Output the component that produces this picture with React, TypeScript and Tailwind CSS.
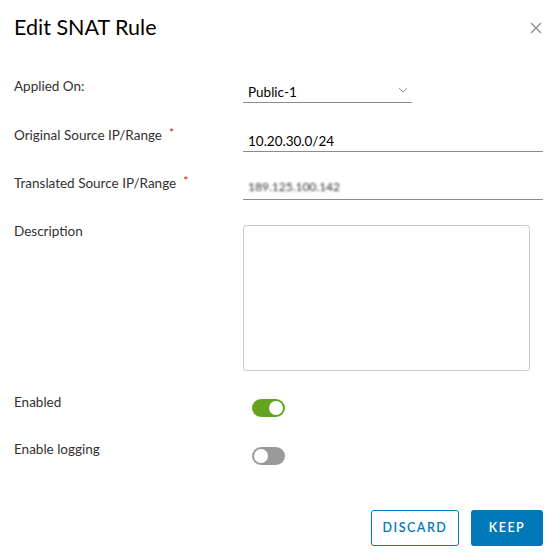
import React from "react";

function Toggle({ on }: { on: boolean }) {
  return (
    <div
      className={
        "relative w-[33px] h-[18px] rounded-full " +
        (on ? "bg-[#62a420]" : "bg-[#9a9a9a]")
      }
    >
      <div
        className={
          "absolute top-[2px] w-[14px] h-[14px] rounded-full bg-white " +
          (on ? "right-[2px]" : "left-[2px]")
        }
      />
    </div>
  );
}

function Req() {
  return <span className="text-[#c92100] ml-[7px] text-[12px] relative top-[-3px]">*</span>;
}

export default function App() {
  return (
    <div
      className="w-[560px] h-[560px] bg-white text-[#313131] relative"
      style={{ fontFamily: "Lato, 'Liberation Sans', sans-serif" }}
    >
      <div className="flex items-center justify-between pl-[14px] pr-[18px] pt-[13px]">
        <h1 className="text-[21.5px] leading-[28px] text-[#000] font-normal">Edit SNAT Rule</h1>
        <svg width="12" height="12" viewBox="0 0 12 12" className="mt-[1px]">
          <path d="M1 1L11 11M11 1L1 11" stroke="#8c8c8c" strokeWidth="1.3" />
        </svg>
      </div>

      <div className="pl-[14px] pr-[17px] mt-[36px] flex flex-col">
        <div className="flex h-[26px] items-start">
          <div className="w-[229px] text-[13.5px] leading-[18px]">Applied On:</div>
          <div className="w-[169px] h-[26px] border-b border-[#8c8c8c] flex items-end justify-between pl-[5px] pr-[4px] pb-[1px]">
            <span className="text-[13.5px] leading-[18px] text-[#000]">Public-1</span>
            <svg width="10" height="6" viewBox="0 0 10 6" className="mb-[8px]">
              <path d="M1 1L5 5L9 1" stroke="#9a9a9a" strokeWidth="1" fill="none" />
            </svg>
          </div>
        </div>

        <div className="flex h-[26px] items-start mt-[23px]">
          <div className="w-[229px] text-[13.5px] leading-[18px]">
            Original Source IP/Range<Req />
          </div>
          <div className="flex-1 h-[26px] border-b border-[#8c8c8c] flex items-end pl-[5px] pb-[1px]">
            <span className="text-[13.5px] leading-[18px] text-[#000]">10.20.30.0/24</span>
          </div>
        </div>

        <div className="flex h-[26px] items-start mt-[22px]">
          <div className="w-[229px] text-[13.5px] leading-[18px]">
            Translated Source IP/Range<Req />
          </div>
          <div className="flex-1 h-[26px] border-b border-[#8c8c8c] flex items-end pl-[5px] pb-[3px]">
            <span className="text-[12px] leading-[18px] text-[#333] blur-[1.2px]">189.125.100.142</span>
          </div>
        </div>

        <div className="flex items-start mt-[25px]">
          <div className="w-[229px] text-[13.5px] leading-[18px] mt-[-3px]">Description</div>
          <div className="w-[287px] h-[146px] border border-[#cccccc] rounded-[3px]" />
        </div>

        <div className="flex items-start mt-[22px]">
          <div className="w-[238px] text-[13.5px] leading-[18px]">Enabled</div>
          <div className="pt-[6px]">
            <Toggle on />
          </div>
        </div>

        <div className="flex items-start mt-[23px]">
          <div className="w-[238px] text-[13.5px] leading-[18px]">Enable logging</div>
          <div className="pt-[7px]">
            <Toggle on={false} />
          </div>
        </div>
      </div>

      <div className="flex justify-end gap-[12px] pr-[17px] mt-[45px]">
        <button className="w-[88px] h-[36px] border border-[#0079b8] rounded-[3px] text-[#0079b8] text-[12.5px] font-semibold tracking-[0.12em] bg-white">
          DISCARD
        </button>
        <button className="w-[72px] h-[36px] rounded-[3px] bg-[#0079b8] text-white text-[12.5px] font-semibold tracking-[0.12em]">
          KEEP
        </button>
      </div>
    </div>
  );
}
